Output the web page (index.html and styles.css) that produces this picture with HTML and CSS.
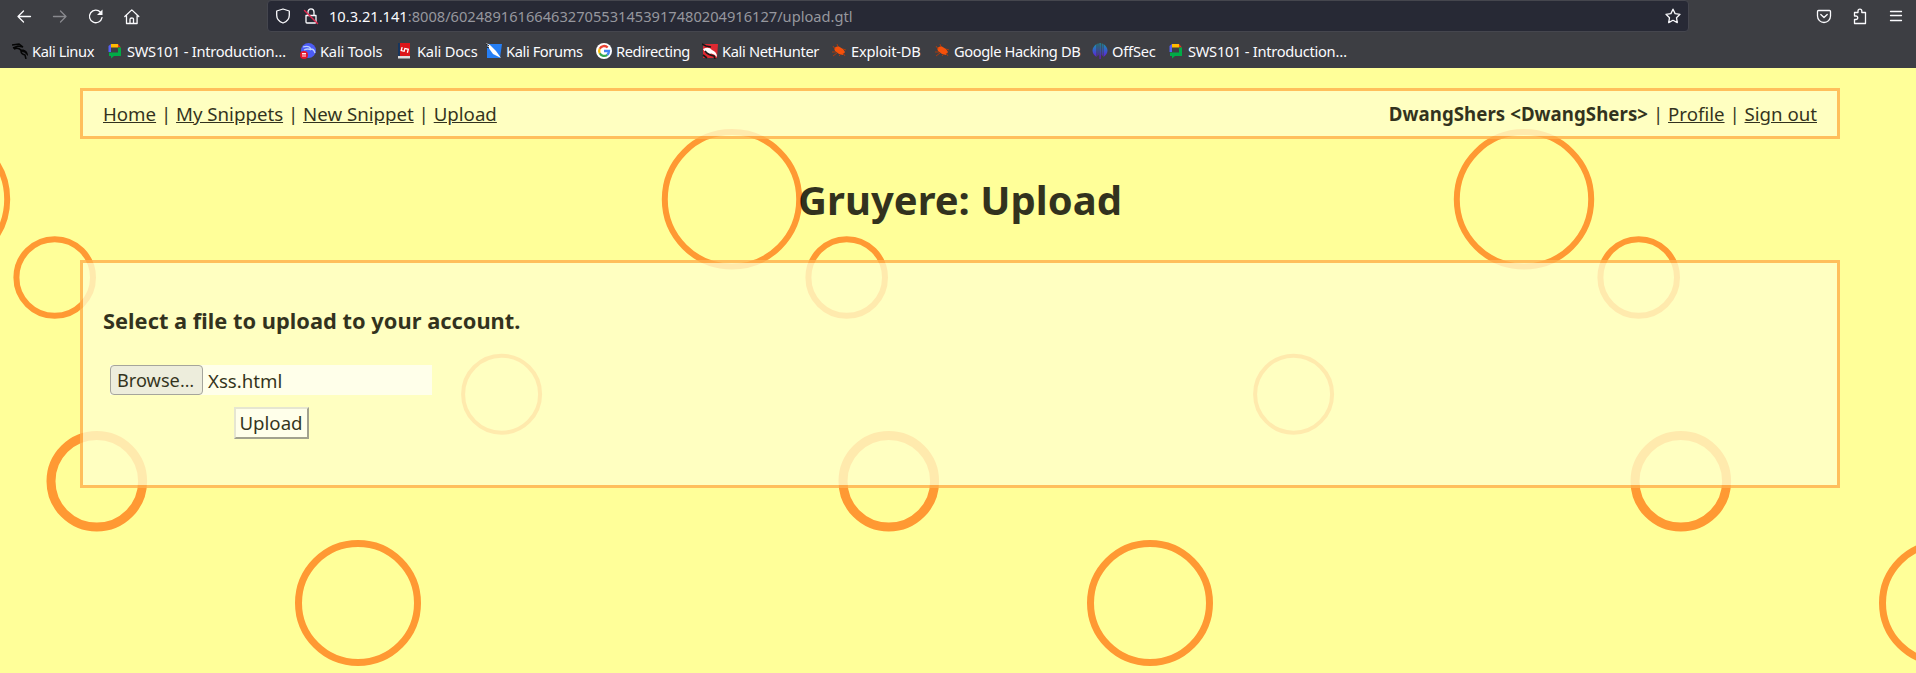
FILE: index.html
```html
<!DOCTYPE html>
<html lang="en">
<head>
<meta charset="utf-8">
<title>Gruyere: Upload</title>
<link rel="stylesheet" href="styles.css">
</head>
<body>
<svg class="defs" width="0" height="0" aria-hidden="true">
  <symbol id="classroom" viewBox="0 0 16 16">
    <path d="M1.500 3L4 1v8H1.500z" fill="#5560f5"/><path d="M4 1h7v3.500H4z" fill="#ffba00"/><path d="M11 1l3 3.500h-3z" fill="#ea3323"/>
    <path d="M11 4.500h3V13H7l-3 2.500V13H2V9.500h9z" fill="#00ac47"/>
  </symbol>
  <symbol id="bug" viewBox="0 0 16 16">
    <path d="M3 5l4-2 5 3 2 3-2 3-4-1-4-3z" fill="#f4510b"/>
    <path d="M2 3l2 3M6 1l1 3M12 6l3 1M1 9l4 0M2 13l4-3M8 13l2-2M12 10l2 3" stroke="#a83c10" stroke-width="1" fill="none"/>
  </symbol>
</svg>
<header class="chrome">
  <div class="toolbar">
    <div class="buttons">
      <svg class="i" viewBox="0 0 16 16"><path d="M14.500 8.500H2M7.500 3L2 8.500 7.500 14"/></svg>
      <svg class="i dim" viewBox="0 0 16 16"><path d="M1.500 8.500H14M8.500 3L14 8.500 8.500 14"/></svg>
      <svg class="i" viewBox="0 0 16 16"><path d="M12.500 4.200A6.300 6.300 0 1 0 14 9.700"/><path class="solid" d="M14.500 1.500V7H9z"/></svg>
      <svg class="i" viewBox="0 0 16 16"><path d="M.8 8.500l7-6.600 7 6.600M2.500 7.500v8h10.600v-8M6 15.500v-4.300q0-1.200 1.800-1.200t1.700 1.200v4.300"/></svg>
    </div>
    <div class="urlbar">
      <svg class="i" viewBox="0 0 16 16"><path d="M8 1l6.300 2v4.200c0 3.800-2.600 6.400-6.300 7.800-3.700-1.400-6.300-4-6.300-7.800V3z"/></svg>
      <svg class="i lock" viewBox="0 0 16 16"><path d="M3 7.500h10V14q0 1-1 1H4q-1 0-1-1zM5 7V4a3 3.200 0 0 1 6 0v3"/><path class="slash" d="M1.500 2.500l13 13"/></svg>
      <span class="url"><b>10.3.21.141</b>:8008/602489161664632705531453917480204916127/upload.gtl</span>
      <svg class="i star" viewBox="0 0 16 16"><path d="M8 1.200l2.100 4.400 4.900.7-3.500 3.400.8 4.900L8 12.300l-4.300 2.300.8-4.900L1 6.300l4.900-.7z"/></svg>
    </div>
    <div class="tools">
      <svg class="i" viewBox="0 0 16 16"><path d="M2.500 2.500h11q1 0 1 1V8a6.500 6.500 0 0 1-13 0V3.500q0-1 1-1zM4.800 6.500L8 9.500l3.200-3"/></svg>
      <svg class="i" viewBox="0 0 16 16"><path d="M2.500 4.500H6V3a1.900 1.900 0 0 1 3.800 0v1.500h3.700v11h-11v-4H4a1.600 1.600 0 0 0 0-3.500H2.500z"/></svg>
      <svg class="i" viewBox="0 0 16 16"><path d="M2.500 3.500h11M2.500 7.500h11M2.500 12.500h11"/></svg>
    </div>
  </div>
  <nav class="bookmarks">
    <span class="bm" style="width:95px"><svg viewBox="0 0 16 16"><path d="M0 2l7-1 4 3-5-1-5 2M2 6q4-2 7 1 5 0 6 4l-2-2q-4-1-5-2M9 8q0 3 4 4l1 4" stroke="#050505" stroke-width="1.500" fill="none"/></svg><span class="tight">Kali Linux</span></span>
    <span class="bm" style="width:193px"><svg viewBox="0 0 16 16"><use href="#classroom"/></svg><span class="sws">SWS101 - Introduction…</span></span>
    <span class="bm" style="width:97px"><svg viewBox="0 0 16 16"><circle cx="8.500" cy="7.500" r="7.500" fill="#4c5cf5"/><path d="M3 4q6-2 8 2 3 0 4 4M4 7q4-2 7 0" stroke="#b9d0ff" stroke-width="1.300" fill="none"/><circle cx="4" cy="12" r="4" fill="#e5142b"/><path d="M2 10.500h4M3 10.500v3.500M5 10.500v3.500" stroke="#fff" stroke-width=".9"/></svg><span class="loose">Kali Tools</span></span>
    <span class="bm" style="width:89px"><svg viewBox="0 0 16 16"><path d="M1 0h2v13H1z" fill="#17365e"/><path d="M3 0h10v13H3z" fill="#dd1519"/><path d="M1 13h12v2.500H1z" fill="#ddd"/><path d="M4.500 5v3.500h3V5.500h3.500V9" transform="rotate(15 8 7)" stroke="#fff" stroke-width="1.300" fill="none"/></svg><span class="loose">Kali Docs</span></span>
    <span class="bm" style="width:110px"><svg viewBox="0 0 16 16"><path d="M1 1h15l-2 14H1z" fill="#267ff5"/><path d="M0 0l4 2 6 6 5 7-8-4-5-7z" fill="#fff"/><path d="M0 1l3 2M1 4l2 1" stroke="#111"/></svg><span class="tight">Kali Forums</span></span>
    <span class="bm" style="width:106px"><svg viewBox="0 0 16 16"><circle cx="8" cy="8" r="8" fill="#fff"/><g fill="none" stroke-width="2.300"><path d="M11.700 4.500A5 5 0 0 0 3.700 5.700" stroke="#ea4335"/><path d="M3.700 5.700a5 5 0 0 0 0 4.600" stroke="#fbbc05"/><path d="M3.700 10.300a5 5 0 0 0 7.600 1.500" stroke="#34a853"/><path d="M11.300 11.800A5 5 0 0 0 13 8H8" stroke="#4285f4"/></g></svg><span class="tight">Redirecting</span></span>
    <span class="bm" style="width:129px"><svg viewBox="0 0 16 16"><path d="M1 1h15l-1 14H1z" fill="#df2932"/><path d="M1 6q6-3 9 1 5 2 5 7-4-5-8-3-4-1-6-5z" fill="#fff"/><path d="M0 1l4 2 5 1M3 8q3 4 9 5l1 3M1 12l4 3" stroke="#191919" stroke-width="1.600" fill="none"/></svg><span class="mid">Kali NetHunter</span></span>
    <span class="bm" style="width:103px"><svg viewBox="0 0 16 16"><use href="#bug"/></svg><span class="loose">Exploit-DB</span></span>
    <span class="bm" style="width:158px"><svg viewBox="0 0 16 16"><use href="#bug"/></svg><span class="tight">Google Hacking DB</span></span>
    <span class="bm" style="width:76px"><svg viewBox="0 0 16 16"><defs><linearGradient id="og" gradientUnits="userSpaceOnUse" x1="0" y1="0" x2="0" y2="16"><stop stop-color="#159aa7"/><stop offset=".5" stop-color="#3956ce"/><stop offset="1" stop-color="#7509ce"/></linearGradient></defs><path d="M4.500 1v13Q.5 11 .5 7.500T4.500 1zM5.500.8l1-.3V12l-1 1zM7.500 0h1.200v16H7.500zM9.700.5l1 .3V13l-1-1zM11.500 1q4 3 4 6.500t-4 6.500z" fill="url(#og)"/></svg><span class="loose">OffSec</span></span>
    <span class="bm"><svg viewBox="0 0 16 16"><use href="#classroom"/></svg><span class="sws">SWS101 - Introduction…</span></span>
  </nav>
</header>
<main class="page">
  <svg class="holes" width="1916" height="605" aria-hidden="true">
    <defs>
      <g id="tile" fill="none" stroke="#ff9933">
        <circle cx="732" cy="131.300" r="67.200" stroke-width="6"/>
        <circle cx="54.700" cy="209.500" r="38.300" stroke-width="6"/>
        <circle cx="501.600" cy="326.200" r="38.500" stroke-width="4"/>
        <circle cx="96.800" cy="413.300" r="45.800" stroke-width="9"/>
        <circle cx="358" cy="535" r="59.500" stroke-width="7"/>
      </g>
    </defs>
    <use href="#tile" x="-792"/><use href="#tile"/><use href="#tile" x="792"/><use href="#tile" x="1584"/>
  </svg>
  <div class="box menu">
    <div><a>Home</a> | <a>My Snippets</a> | <a>New Snippet</a> | <a>Upload</a></div>
    <div><b>DwangShers &lt;DwangShers&gt;</b> | <a>Profile</a> | <a>Sign out</a></div>
  </div>
  <h1>Gruyere: Upload</h1>
  <section class="box content">
    <h3>Select a file to upload to your account.</h3>
    <form class="form">
      <div class="file"><span class="browse">Browse<span class="dots">…</span></span><span class="name">Xss.html</span></div>
      <span class="submit">Upload</span>
    </form>
  </section>
</main>
</body>
</html>
```
FILE: styles.css
```css
* { box-sizing: border-box; }
body { margin: 0; background: #ffff99; font-family: "Noto Sans", sans-serif; font-size: 18.67px; color: #000; height: 673px; overflow: hidden; }
.defs { position: absolute; }
.chrome { height: 68px; background: #3d3e43; color: #fbfbfe; font-size: 14.67px; }
.toolbar { display: flex; height: 32px; align-items: center; }
.i { width: 16px; height: 16px; flex: none; fill: none; stroke: #fbfbfe; stroke-width: 1.3; stroke-linecap: round; stroke-linejoin: round; overflow: visible; }
.i .solid { fill: #fbfbfe; stroke: none; }
.i .slash { stroke: #e22850; stroke-width: 1.4; }
.dim { opacity: .4; }
.buttons { display: flex; gap: 20px; width: 267px; padding-left: 16px; flex: none; }
.urlbar { width: 1422px; height: 32px; border: 1px solid #45464e; border-radius: 4px; background: #272935; display: flex; align-items: center; padding: 0 7px 0 7px; flex: none; }
.lock { margin-left: 12px; }
.url { margin-left: 10px; flex: 1; color: #96979e; white-space: nowrap; letter-spacing: -.01px; }
.url b { font-weight: normal; color: #fbfbfe; }
.tools { display: flex; gap: 20px; margin-left: auto; padding-right: 12px; }
.bookmarks { display: flex; height: 36px; padding: 2px 0 0 12px; align-items: center; }
.bm { display: flex; align-items: center; gap: 4px; white-space: nowrap; flex: none; }
.bm svg { width: 16px; height: 16px; flex: none; }
.tight { letter-spacing: -.4px; }
.mid { letter-spacing: -.35px; }
.sws { letter-spacing: -.28px; }
.loose { letter-spacing: -.2px; }
.page { position: relative; height: 605px; padding: 20px 76px 0 80px; }
.holes { position: absolute; left: 0; top: 0; z-index: -1; }
.box { background: #ffffcc; border: 3px solid #ffb04d; opacity: .8; }
.menu { height: 51px; padding: 0 20px; display: flex; justify-content: space-between; align-items: center; }
.menu a { text-decoration: underline; }
.menu b { letter-spacing: .05px; }
h1 { margin: 0; height: 121px; line-height: 121px; text-align: center; font-size: 40px; opacity: .8; }
.content { height: 228px; padding: 43px 20px 0; }
h3 { margin: 0; font-size: 21.85px; line-height: 30px; }
.form { display: flex; flex-direction: column; width: 322px; margin: 29px 0 0 7px; align-items: center; gap: 12px; }
.file { display: flex; width: 322px; height: 30px; background: #fff; align-items: center; }
.browse { width: 93px; height: 30px; border: 1px solid #8f8f9d; border-radius: 4px; background: #e9e9ed; line-height: 29px; padding-left: 6px; font-size: 18.2px; }
.dots { font-family: "Open Sans", sans-serif; letter-spacing: 1px; }
.name { margin-left: 5px; }
.submit { width: 75px; height: 32px; border: 2px outset #e0e0e0; background: #fff; line-height: 27px; text-align: center; }
```
